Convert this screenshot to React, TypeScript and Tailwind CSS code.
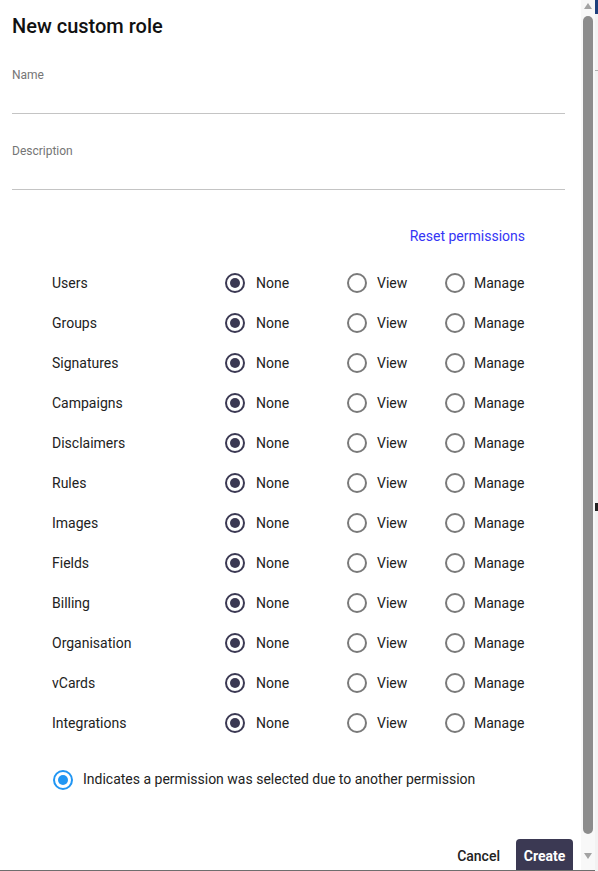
import React from "react";

const perms = [
  "Users",
  "Groups",
  "Signatures",
  "Campaigns",
  "Disclaimers",
  "Rules",
  "Images",
  "Fields",
  "Billing",
  "Organisation",
  "vCards",
  "Integrations",
];

function Radio({ checked }: { checked?: boolean }) {
  return checked ? (
    <span className="flex h-[20px] w-[20px] shrink-0 items-center justify-center rounded-full border-2 border-[#3b3953]">
      <span className="h-[10px] w-[10px] rounded-full bg-[#3b3953]" />
    </span>
  ) : (
    <span className="h-[20px] w-[20px] shrink-0 rounded-full border-2 border-[#7a7a7a]" />
  );
}

export default function App() {
  return (
    <div
      className="flex h-[871px] w-[598px] overflow-hidden bg-white"
      style={{ fontFamily: "Roboto, 'Liberation Sans', sans-serif" }}
    >
      <div className="relative flex h-full w-[595px] border-b border-[#6e6e6e]">
        {/* content */}
        <div className="flex h-full w-[581px] flex-col overflow-hidden">
          <h1 className="shrink-0 pl-[12px] pt-[14px] text-[20px] font-medium leading-[24px] text-[#111]">
            New custom role
          </h1>
          <div className="ml-[12px] mt-[30px] flex w-[553px] shrink-0 flex-col gap-[30px]">
            <div className="flex h-[46px] flex-col border-b border-[#c4c4c4]">
              <span className="text-[12px] leading-[14px] text-[#757575]">Name</span>
            </div>
            <div className="flex h-[46px] flex-col border-b border-[#c4c4c4]">
              <span className="text-[12px] leading-[14px] text-[#757575]">Description</span>
            </div>
          </div>
          <div className="ml-[52px] mt-[38px] w-[473px] shrink-0">
            <div className="flex justify-end">
              <span className="text-[14px] leading-[16px] text-[#3535f5]">Reset permissions</span>
            </div>
            <div className="mt-[19px] flex flex-col">
              {perms.map((p) => (
                <div
                  key={p}
                  className="grid h-[40px] grid-cols-[173px_122px_98px_80px] items-center text-[14px] text-[#222]"
                >
                  <span>{p}</span>
                  <span className="flex items-center gap-[11px]">
                    <Radio checked />
                    <span>None</span>
                  </span>
                  <span className="flex items-center gap-[10px]">
                    <Radio />
                    <span>View</span>
                  </span>
                  <span className="flex items-center gap-[9px]">
                    <Radio />
                    <span>Manage</span>
                  </span>
                </div>
              ))}
            </div>
          </div>
          <div className="ml-[53px] mt-[26px] flex shrink-0 items-center gap-[10px] text-[14px] text-[#222]">
            <span className="flex h-[20px] w-[20px] items-center justify-center rounded-full border-2 border-[#2196f3]">
              <span className="h-[10px] w-[10px] rounded-full bg-[#2196f3]" />
            </span>
            <span>Indicates a permission was selected due to another permission</span>
          </div>
          <div className="mr-[8px] mt-[49px] flex shrink-0 items-start justify-end gap-[16px]">
            <span className="pt-[9px] text-[14px] font-medium leading-[16px] text-[#222]">Cancel</span>
            <span className="flex h-[36px] w-[57px] items-start justify-center rounded-t-[4px] bg-[#3b3953] pt-[9px] text-[14px] font-bold leading-[16px] text-white">
              Create
            </span>
          </div>
        </div>
        {/* scrollbar */}
        <div className="flex h-full w-[14px] flex-col items-center bg-[#f8f8f8]">
          <div className="mt-[3px] h-0 w-0 border-x-[4px] border-b-[6px] border-x-transparent border-b-[#a3a3a3]" />
          <div className="mt-[7px] h-[818px] w-[10px] rounded-full bg-[#8c8c8c]" />
          <div className="mt-[19px] h-0 w-0 border-x-[4px] border-t-[6px] border-x-transparent border-t-[#a3a3a3]" />
        </div>
      </div>
      {/* background strip */}
      <div className="flex h-full w-[3px] flex-col bg-[#f2f2f2]">
        <div className="h-[14px] bg-[#1d3f7c]" />
        <div className="mt-[56px] h-px bg-[#b0b0b0]" />
        <div className="mt-[432px] h-[8px] bg-[#222]" />
      </div>
    </div>
  );
}
